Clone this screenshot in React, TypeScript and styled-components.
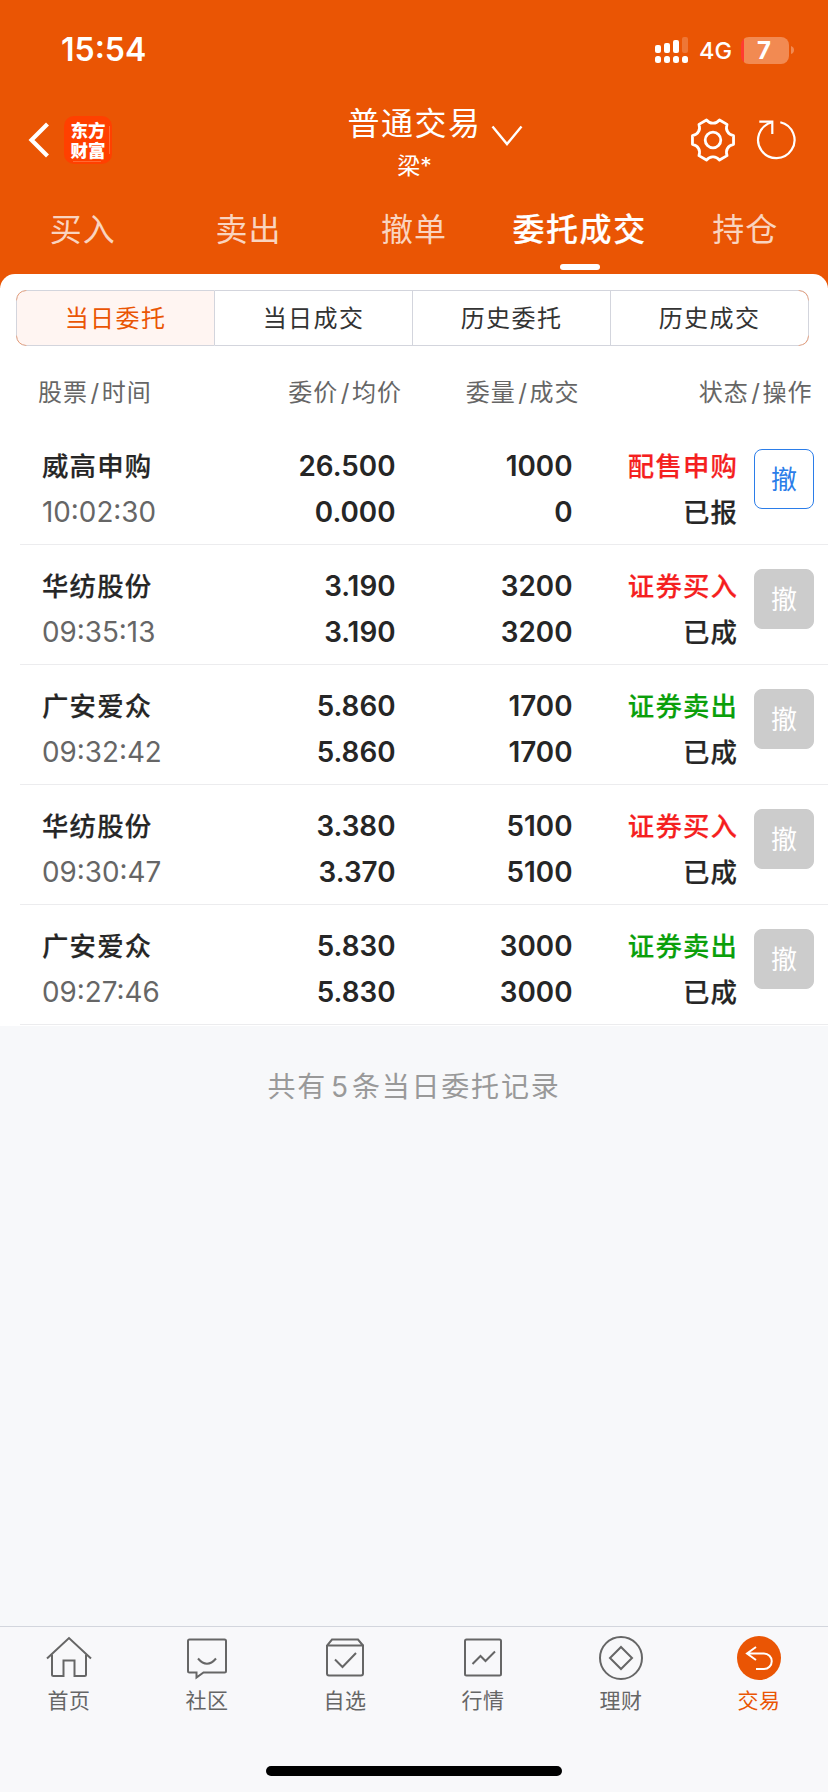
import React from 'react';
import styled, { createGlobalStyle, css } from 'styled-components';

const ORANGE = '#ea5504';
const GREY = '#666666';

const Global = createGlobalStyle`
  *, *::before, *::after { box-sizing: border-box; }
  body { margin: 0; background: #f7f8fa; }
`;

const Screen = styled.div`
  width: 828px;
  height: 1792px;
  display: flex;
  flex-direction: column;
  background: #f7f8fa;
  font-family: Inter, 'Noto Sans CJK SC', sans-serif;
  color: #262626;
  overflow: hidden;
  white-space: nowrap;
`;

const Header = styled.header`
  height: 288px;
  flex: none;
  background: ${ORANGE};
  color: #fff;
  display: flex;
  flex-direction: column;
`;

const StatusBar = styled.div`
  height: 100px;
  padding: 0 34px 0 61px;
  display: flex;
  align-items: center;
  justify-content: space-between;
`;

const Clock = styled.span`
  font-size: 32px;
  font-weight: 600;
  line-height: 40px;
`;

const StatusIcons = styled.div`
  display: flex;
  align-items: center;
`;

const Network = styled.span`
  font-size: 23.5px;
  line-height: 28px;
  font-weight: 500;
  width: 32px;
  margin: 2px 10px 0 11px;
`;

const Battery = styled.div`
  width: 48px;
  height: 27px;
  margin-right: 2px;
  border-radius: 8px;
  background: linear-gradient(90deg, #ff3b30 0 3px, #f28a52 3px);
  font-size: 24px;
  font-weight: 700;
  line-height: 27px;
  text-align: center;
  padding-right: 2px;
`;

const NavBar = styled.div`
  height: 80px;
  display: grid;
  grid-template-columns: 280px 1fr 280px;
  align-items: center;
`;

const NavLeft = styled.div`
  display: flex;
  align-items: center;
  padding-left: 28px;
  gap: 14px;
`;

const Logo = styled.div`
  width: 48px;
  height: 48px;
  border-radius: 10px;
  background:
    linear-gradient(#ff6a33, #ff6a33) 45px 10px / 1px 28px no-repeat,
    linear-gradient(#ff6a33, #ff6a33) 9px 45px / 28px 1px no-repeat,
    #ff4000;
  display: grid;
  place-content: center;
  font: 900 17.5px/20px 'Noto Sans CJK SC', sans-serif;
  text-align: center;
`;

const Title = styled.div`
  height: 80px;
  padding-left: 42px;
  display: flex;
  align-items: flex-start;
  justify-content: center;
  gap: 9px;
`;

const TitleText = styled.div`
  display: flex;
  flex-direction: column;
  align-items: center;
  padding-top: 4px;
`;

const TitleMain = styled.span`
  font-size: 32px;
  line-height: 40px;
  letter-spacing: 1.5px;
`;

const TitleSub = styled.span`
  font-size: 23px;
  line-height: 44px;
`;

const ChevronDown = styled.svg`
  margin-top: 25px;
`;

const NavRight = styled.div`
  display: flex;
  align-items: center;
  justify-content: flex-end;
  gap: 20px;
  padding-right: 32px;
`;

const Tabs = styled.nav`
  height: 94px;
  display: grid;
  grid-template-columns: repeat(5, 165.6px);
`;

const Tab = styled.div<{ $active?: boolean }>`
  display: flex;
  flex-direction: column;
  align-items: center;
  justify-content: space-between;
  padding: 28px 0 4px;
  font-size: 32px;
  line-height: 44px;
  letter-spacing: 1px;
  color: ${p => (p.$active ? '#fff' : 'rgba(255,255,255,0.75)')};
  ${p => p.$active && css`
    font-weight: 500;
    letter-spacing: 1.6px;
    -webkit-text-stroke: 0.2px #fff;
    &::after {
      content: '';
      width: 40px;
      height: 6px;
      border-radius: 3px;
      background: #fff;
    }
  `}
`;

const Panel = styled.main`
  flex: none;
  margin-top: -14px;
  height: 752px;
  background: #fff;
  border-radius: 15px 15px 0 0;
  padding-top: 16px;
`;

const Segments = styled.div`
  position: relative;
  margin-left: 16px;
  width: 793px;
  display: flex;
  &::after {
    content: '';
    position: absolute;
    inset: 0;
    border: 1px solid #ec9a70;
    border-radius: 10px;
    mask-image:
      linear-gradient(90deg, #000 9px, transparent 11px calc(100% - 11px), #000 calc(100% - 9px)),
      linear-gradient(#000 9px, transparent 11px calc(100% - 11px), #000 calc(100% - 9px));
    mask-composite: intersect;
  }
`;

const Segment = styled.div<{ $active?: boolean }>`
  width: 198px;
  height: 56px;
  padding-bottom: 3px;
  border: 1px solid #d3d5dd;
  border-left-width: 0;
  display: flex;
  align-items: center;
  justify-content: center;
  font-size: 24px;
  letter-spacing: 1.4px;
  color: ${p => (p.$active ? ORANGE : '#333')};
  background: ${p => (p.$active ? '#fff5f2' : '#fff')};
  &:first-child {
    width: 199px;
    border-left-width: 1px;
    border-radius: 10px 0 0 10px;
  }
  &:last-child { border-radius: 0 10px 10px 0; }
`;

const ColumnHeads = styled.div`
  display: grid;
  height: 79px;
  padding: 31px 15.500px 0 38px;
  grid-template-columns: 200px 164px 177.500px 1fr;
  font-size: 24px;
  line-height: 32px;
  letter-spacing: 1px;
  color: ${GREY};
`;

const Head = styled.span<{ $left?: boolean }>`
  text-align: ${p => (p.$left ? 'left' : 'right')};
`;

const Slash = styled.span`
  margin: 0 1.5px 0 2.5px;
`;

const Row = styled.div`
  margin-left: 20px;
  height: 120px;
  border-bottom: 1px solid #ececee;
  padding: 18px 14px 0 22px;
  display: grid;
  grid-template-columns: 200px 153.5px 177px 164.5px 1fr;
`;

const Cell = styled.div<{ $left?: boolean }>`
  display: flex;
  flex-direction: column;
  align-items: ${p => (p.$left ? 'flex-start' : 'flex-end')};
  font-size: 27.8px;
  line-height: 46px;
  font-weight: 600;
`;

const Cjk = styled.span<{ $color?: string }>`
  height: 46px;
  font-size: 26.4px;
  font-weight: 500;
  letter-spacing: 1.2px;
  margin-right: -1.2px;
  -webkit-text-stroke: 0.2px currentColor;
  color: ${p => p.$color ?? '#262626'};
`;

const Time = styled.span`
  font-weight: 400;
  color: ${GREY};
`;

const Cancel = styled.button<{ $enabled?: boolean }>`
  justify-self: end;
  margin-top: 6px;
  width: 60px;
  height: 60px;
  padding: 0 0 3px;
  border-radius: 8px;
  font: 400 26px/54px 'Noto Sans CJK SC', sans-serif;
  border: 1px solid ${p => (p.$enabled ? '#2b7de9' : '#ccc')};
  background: ${p => (p.$enabled ? '#fff' : '#ccc')};
  color: ${p => (p.$enabled ? '#2b7de9' : '#fff')};
`;

const Summary = styled.p`
  flex: 1;
  margin: 0;
  padding-top: 39px;
  text-align: center;
  font-size: 28px;
  line-height: 44px;
  letter-spacing: 1.8px;
  color: #999;
`;

const Count = styled.span`
  margin: 0 2px 0 4px;
`;

const BottomBar = styled.footer`
  flex: none;
  height: 166px;
  border-top: 1px solid #d3d6dd;
  background: #f8f8fa;
  display: flex;
  flex-direction: column;
  align-items: center;
  justify-content: space-between;
  padding-bottom: 16px;
`;

const BottomItems = styled.div`
  width: 100%;
  display: grid;
  grid-template-columns: repeat(6, 1fr);
`;

const BottomItem = styled.div<{ $active?: boolean }>`
  padding-top: 8px;
  display: flex;
  flex-direction: column;
  align-items: center;
  font-size: 21px;
  line-height: 30px;
  letter-spacing: 0.6px;
  gap: 5px;
  color: ${p => (p.$active ? ORANGE : GREY)};
`;

const HomeIndicator = styled.div`
  width: 296px;
  height: 10px;
  border-radius: 5px;
  background: #000;
`;

const Signal = () => (
  <svg width="33" height="27" fill="#fff">
    {[8, 6, 3, 0].map((top, i) => (
      <g key={i}>
        <rect x={i * 9} y={top} width="6" height={16 - top} rx="2" opacity={i === 3 ? 0.2 : 1} />
        <rect x={i * 9} y="19" width="6" height="7" rx="2.5" />
      </g>
    ))}
  </svg>
);

const BatteryNub = () => (
  <svg width="3" height="8" fill="#f28a52">
    <path d="M0 0Q3 1 3 4T0 8Z" />
  </svg>
);

const gearPath = (() => {
  const at = (deg: number, r: number) => {
    const a = (deg * Math.PI) / 180;
    return `${(23 + r * Math.cos(a)).toFixed(2)} ${(23 + r * Math.sin(a)).toFixed(2)}`;
  };
  let d = '';
  for (let k = 0; k < 6; k++) {
    const c = k * 60;
    d += `${k ? 'L' : 'M'}${at(c - 12, 21)}L${at(c + 12, 21)}`;
    d += `C${at(c + 17, 17.5)} ${at(c + 21, 16.8)} ${at(c + 30, 16.8)}`;
    d += `C${at(c + 39, 16.8)} ${at(c + 43, 17.5)} ${at(c + 48, 21)}`;
  }
  return d + 'Z';
})();

const Gear = () => (
  <svg width="46" height="46" fill="none" stroke="#fff" strokeWidth="2.8" strokeLinejoin="round">
    <path d={gearPath} />
    <circle cx="23" cy="23" r="7.8" />
  </svg>
);

const Refresh = () => (
  <svg width="40" height="42" fill="none" stroke="#fff" strokeWidth="2.2">
    <path d="M24.300 3.200A18.200 18.200 0 1 1 15.500 3.400" />
    <path d="M3.300 2.700H16.300V15" />
  </svg>
);

const icons: Record<string, React.ReactNode> = {
  首页: (
    <>
      <path d="M1 22.500 23 2 45 22.500" />
      <path d="M6 18.500V38.500Q6 40 7.500 40H17.500V24.500H28.500V40H38.500Q40 40 40 38.500V18.500" />
    </>
  ),
  社区: (
    <>
      <path d="M5.500 3.500H40.500Q42 3.500 42 5V35Q42 36.500 40.500 36.500H19.500L12.500 41.500V36.500H5.500Q4 36.500 4 35V5Q4 3.500 5.500 3.500Z" />
      <path d="M14 22.500Q23 33 32 22.500" />
    </>
  ),
  自选: (
    <>
      <path d="M5 9.500H41V37.500Q41 39.500 39 39.500H7Q5 39.500 5 37.500V9.500L10 3.500H36L41 9.500" />
      <path d="M13 23.500 20.500 31 34 17" />
    </>
  ),
  行情: (
    <>
      <rect x="5" y="3.500" width="36" height="36" rx="1.500" />
      <path d="M12.500 28 20.500 20 25.500 25 35 15.500" />
    </>
  ),
  理财: (
    <>
      <circle cx="23" cy="22" r="21" />
      <path d="M23 11 34 22 23 33 12 22Z" />
    </>
  ),
  交易: (
    <>
      <circle cx="23" cy="22" r="22" fill={ORANGE} stroke="none" />
      <path stroke="#fff" d="M20 11 11 17.500 20 24M11 17.500H28A7.500 7.500 0 0 1 28 33H20" />
    </>
  ),
};

const orders = [
  ['威高申购', '10:02:30', '26.500', '0.000', '1000', '0', '配售申购', '已报'],
  ['华纺股份', '09:35:13', '3.190', '3.190', '3200', '3200', '证券买入', '已成'],
  ['广安爱众', '09:32:42', '5.860', '5.860', '1700', '1700', '证券卖出', '已成'],
  ['华纺股份', '09:30:47', '3.380', '3.370', '5100', '5100', '证券买入', '已成'],
  ['广安爱众', '09:27:46', '5.830', '5.830', '3000', '3000', '证券卖出', '已成'],
];

const heads = [['股票', '时间'], ['委价', '均价'], ['委量', '成交'], ['状态', '操作']];

export default function App() {
  return (
    <Screen>
      <Global />
      <Header>
        <StatusBar>
          <Clock>15:54</Clock>
          <StatusIcons>
            <Signal />
            <Network>4G</Network>
            <Battery>7</Battery>
            <BatteryNub />
          </StatusIcons>
        </StatusBar>
        <NavBar>
          <NavLeft>
            <svg width="22" height="36" fill="none" stroke="#fff" strokeWidth="4.200">
              <path d="M19.500 2 3.500 18 19.500 34" />
            </svg>
            <Logo>东方<br />财富</Logo>
          </NavLeft>
          <Title>
            <TitleText>
              <TitleMain>普通交易</TitleMain>
              <TitleSub>梁*</TitleSub>
            </TitleText>
            <ChevronDown width="32" height="22" fill="none" stroke="#fff" strokeWidth="2.4">
              <path d="M1.500 1.500 16 19 30.500 1.500" />
            </ChevronDown>
          </Title>
          <NavRight>
            <Gear />
            <Refresh />
          </NavRight>
        </NavBar>
        <Tabs>
          {['买入', '卖出', '撤单', '委托成交', '持仓'].map(t => (
            <Tab key={t} $active={t === '委托成交'}>{t}</Tab>
          ))}
        </Tabs>
      </Header>
      <Panel>
        <Segments>
          {['当日委托', '当日成交', '历史委托', '历史成交'].map((t, i) => (
            <Segment key={t} $active={i === 0}>{t}</Segment>
          ))}
        </Segments>
        <ColumnHeads>
          {heads.map(([a, b], i) => (
            <Head key={a} $left={i === 0}>{a}<Slash>/</Slash>{b}</Head>
          ))}
        </ColumnHeads>
        {orders.map(([name, time, price, avg, qty, done, kind, state], i) => (
          <Row key={time}>
            <Cell $left><Cjk>{name}</Cjk><Time>{time}</Time></Cell>
            <Cell><span>{price}</span><span>{avg}</span></Cell>
            <Cell><span>{qty}</span><span>{done}</span></Cell>
            <Cell>
              <Cjk $color={kind === '证券卖出' ? '#0a9f0a' : '#f51f1f'}>{kind}</Cjk>
              <Cjk>{state}</Cjk>
            </Cell>
            <Cancel $enabled={i === 0}>撤</Cancel>
          </Row>
        ))}
      </Panel>
      <Summary>共有<Count>5</Count>条当日委托记录</Summary>
      <BottomBar>
        <BottomItems>
          {Object.keys(icons).map(label => (
            <BottomItem key={label} $active={label === '交易'}>
              <svg width="46" height="46" viewBox="0 -1 46 46" fill="none" stroke="#666" strokeWidth="2">
                {icons[label]}
              </svg>
              <span>{label}</span>
            </BottomItem>
          ))}
        </BottomItems>
        <HomeIndicator />
      </BottomBar>
    </Screen>
  );
}
